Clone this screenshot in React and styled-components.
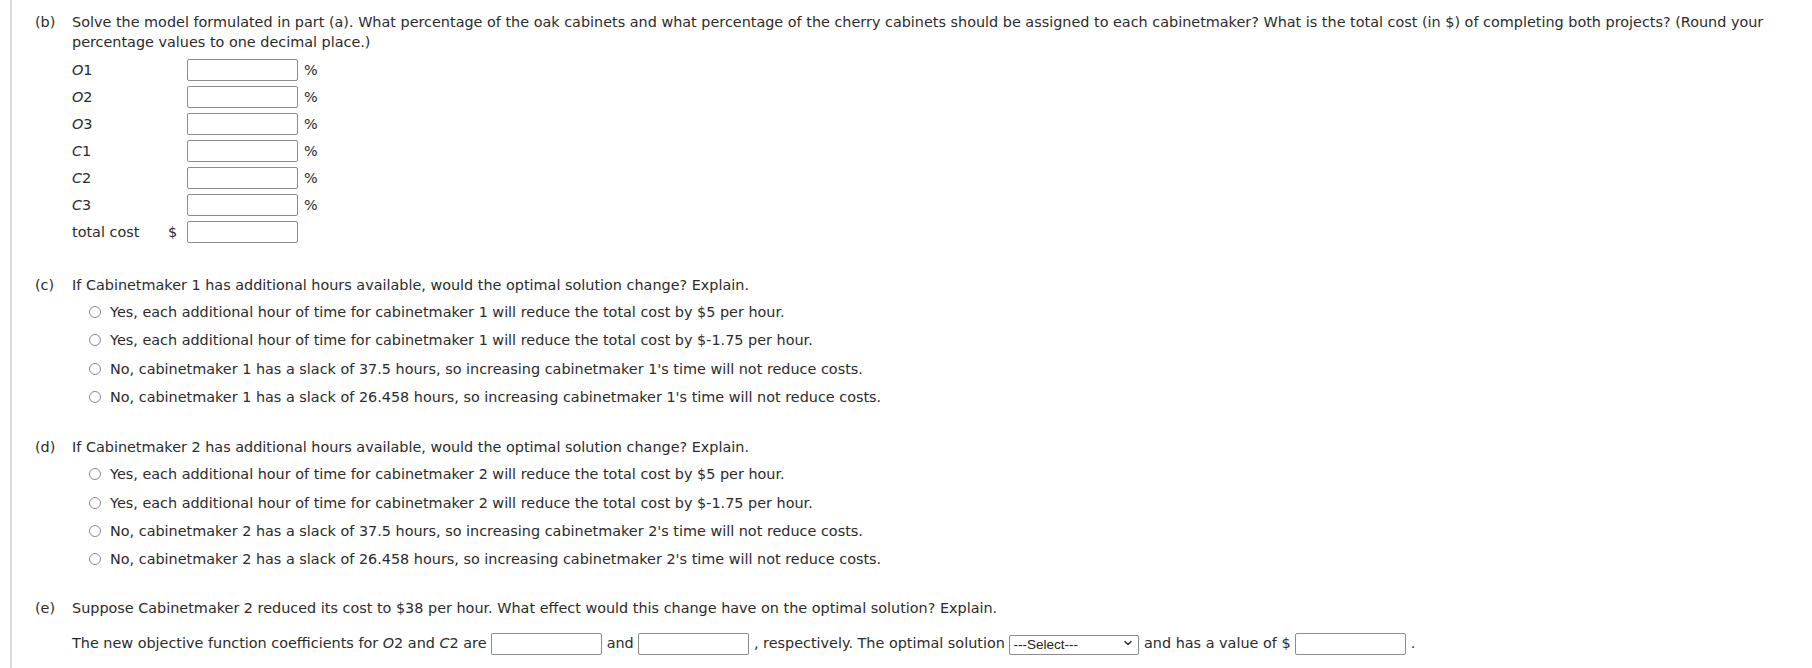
import React from 'react';
import styled, { createGlobalStyle } from 'styled-components';
import { ChevronDown } from 'lucide-react';

const GlobalStyle = createGlobalStyle`
  body {
    margin: 0;
    background: #fff;
    color: #2b2b2b;
    font-family: "DejaVu Sans", Verdana, sans-serif;
    font-size: 14.4px;
  }
`;

// page with the light rule down the left side
const Page = styled.div`
  box-sizing: border-box;
  min-height: 668px;
  margin-left: 10px;
  border-left: 2px solid #dcdcdc;
  padding: 12px 22px 0 23px;
`;

const Part = styled.section`
  display: grid;
  grid-template-columns: 37px 1fr;
  margin-top: ${(p) => p.gap || 0}px;
`;

const PartLabel = styled.div`
  line-height: 20px;
`;

const PartBody = styled.div`
  min-width: 0;
`;

const Question = styled.p`
  margin: 0;
  line-height: 20px;
`;

const Var = styled.i`
  font-style: italic;
`;

// part (b) answer table
const AnswerTable = styled.div`
  display: flex;
  flex-direction: column;
  gap: 5px;
  margin-top: 7px;
`;

const AnswerRow = styled.div`
  display: flex;
  align-items: center;
  height: 22px;
`;

const RowLabel = styled.span`
  width: 96px;
`;

const Unit = styled.span`
  width: 19px;
`;

const Suffix = styled.span`
  margin-left: 6px;
`;

const Field = styled.input`
  box-sizing: border-box;
  width: ${(p) => p.w || 111}px;
  height: 22px;
  margin: 0;
  padding: 0 4px;
  border: 1px solid #8c8c8c;
  border-radius: 2px;
  background: #fff;
  font: inherit;
  vertical-align: middle;
`;

// radio choices
const Choices = styled.div`
  margin-top: 3px;
`;

const Choice = styled.label`
  display: flex;
  align-items: center;
  height: 28.3px;
  padding-left: 17px;
`;

const Radio = styled.input.attrs({ type: 'radio' })`
  appearance: none;
  box-sizing: border-box;
  width: 12px;
  height: 12px;
  margin: 0 9px 0 0;
  border: 1px solid #8a8a8a;
  border-radius: 50%;
  background: #fff;
`;

// part (e) inline answer line
const FillLine = styled.div`
  margin-top: 14px;
  line-height: 22px;
  white-space: nowrap;
`;

const SelectWrap = styled.span`
  position: relative;
  display: inline-block;
  vertical-align: middle;
`;

const Select = styled.select`
  appearance: none;
  box-sizing: border-box;
  width: 130px;
  height: 20px;
  margin: 0;
  padding: 0 20px 0 3px;
  border: 1px solid #8c8c8c;
  border-radius: 2px;
  background: #fff;
  color: #222;
  font-family: "Liberation Sans", Arial, sans-serif;
  font-size: 13.5px;
`;

const Caret = styled(ChevronDown)`
  position: absolute;
  right: 5px;
  top: 4px;
  pointer-events: none;
`;

const bRows = ['1', '2', '3'];

const ChoiceList = ({ name, n }) => (
  <Choices>
    <Choice>
      <Radio name={name} />
      Yes, each additional hour of time for cabinetmaker {n} will reduce the total cost by $5 per hour.
    </Choice>
    <Choice>
      <Radio name={name} />
      Yes, each additional hour of time for cabinetmaker {n} will reduce the total cost by $-1.75 per hour.
    </Choice>
    <Choice>
      <Radio name={name} />
      No, cabinetmaker {n} has a slack of 37.5 hours, so increasing cabinetmaker {n}'s time will not reduce costs.
    </Choice>
    <Choice>
      <Radio name={name} />
      No, cabinetmaker {n} has a slack of 26.458 hours, so increasing cabinetmaker {n}'s time will not reduce costs.
    </Choice>
  </Choices>
);

const App = () => {
  return (
    <>
      <GlobalStyle />
      <Page>
        <Part>
          <PartLabel>(b)</PartLabel>
          <PartBody>
            <Question>
              Solve the model formulated in part (a). What percentage of the oak cabinets and what percentage of the
              cherry cabinets should be assigned to each cabinetmaker? What is the total cost (in $) of completing both
              projects? (Round your percentage values to one decimal place.)
            </Question>
            <AnswerTable>
              {['O', 'C'].map((v) =>
                bRows.map((k) => (
                  <AnswerRow key={v + k}>
                    <RowLabel>
                      <Var>{v}</Var>
                      {k}
                    </RowLabel>
                    <Unit />
                    <Field />
                    <Suffix>%</Suffix>
                  </AnswerRow>
                ))
              )}
              <AnswerRow>
                <RowLabel>total cost</RowLabel>
                <Unit>$</Unit>
                <Field />
              </AnswerRow>
            </AnswerTable>
          </PartBody>
        </Part>

        <Part gap={32}>
          <PartLabel>(c)</PartLabel>
          <PartBody>
            <Question>If Cabinetmaker 1 has additional hours available, would the optimal solution change? Explain.</Question>
            <ChoiceList name="c" n="1" />
          </PartBody>
        </Part>

        <Part gap={26}>
          <PartLabel>(d)</PartLabel>
          <PartBody>
            <Question>If Cabinetmaker 2 has additional hours available, would the optimal solution change? Explain.</Question>
            <ChoiceList name="d" n="2" />
          </PartBody>
        </Part>

        <Part gap={25}>
          <PartLabel>(e)</PartLabel>
          <PartBody>
            <Question>
              Suppose Cabinetmaker 2 reduced its cost to $38 per hour. What effect would this change have on the
              optimal solution? Explain.
            </Question>
            <FillLine>
              The new objective function coefficients for <Var>O</Var>2 and <Var>C</Var>2 are <Field /> and{' '}
              <Field /> , respectively. The optimal solution{' '}
              <SelectWrap>
                <Select defaultValue="">
                  <option value="">---Select---</option>
                  <option>changes</option>
                  <option>does not change</option>
                </Select>
                <Caret size={12} strokeWidth={3} color="#333" />
              </SelectWrap>{' '}
              and has a value of $ <Field /> .
            </FillLine>
          </PartBody>
        </Part>
      </Page>
    </>
  );
};

export default App;
